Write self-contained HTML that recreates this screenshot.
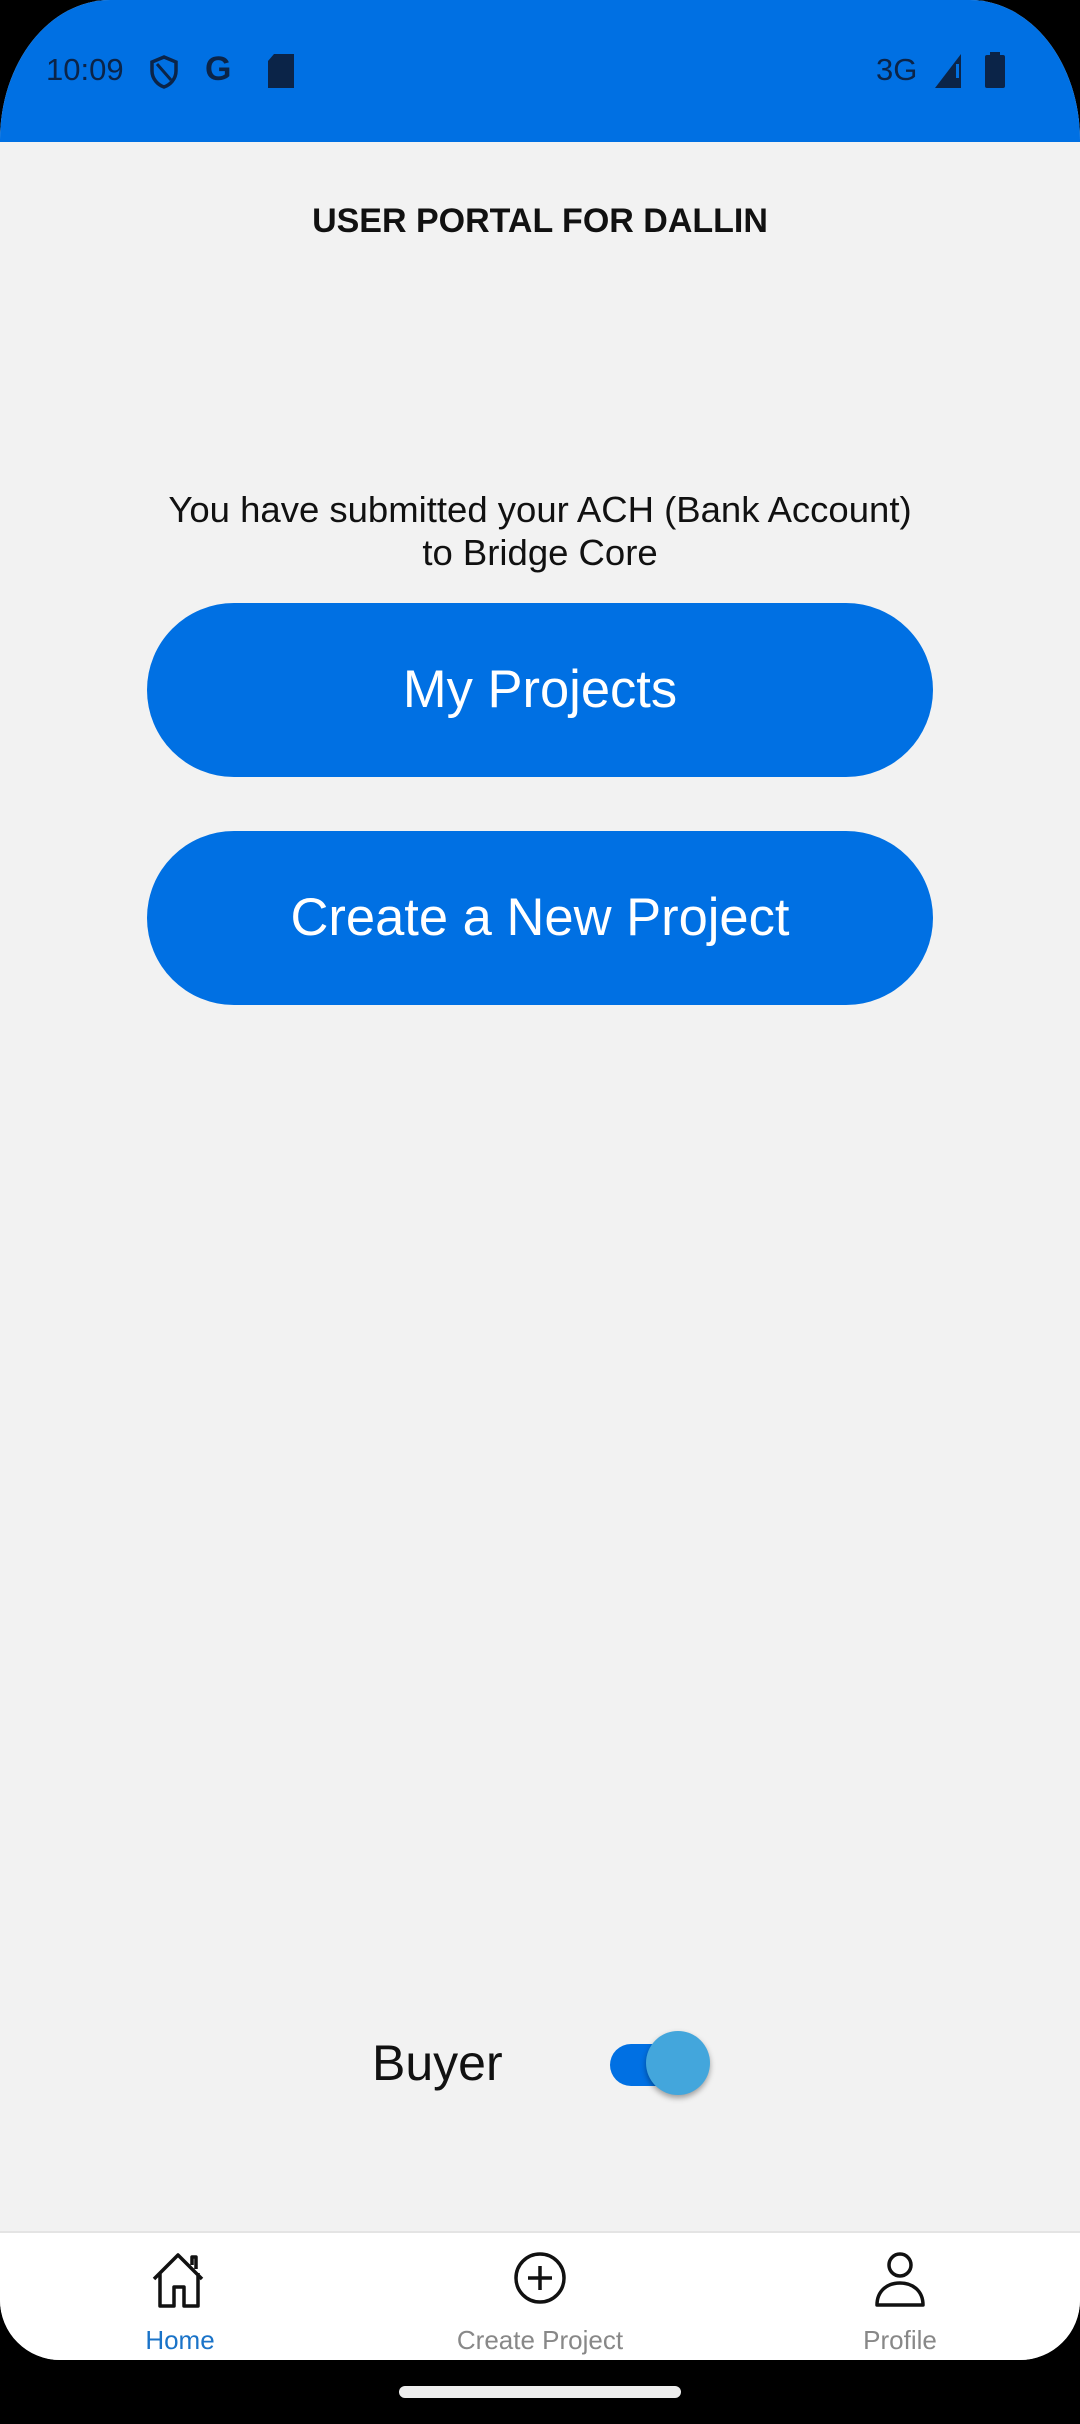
<!DOCTYPE html>
<html><head><meta charset="utf-8"><style>
*{margin:0;padding:0;box-sizing:border-box}
body{width:1080px;height:2424px;background:#000;font-family:"Liberation Sans",sans-serif;overflow:hidden;position:relative}
.screen{position:absolute;left:0;top:0;width:1080px;height:2360px;background:#f2f2f2;border-radius:110px 110px 60px 60px / 140px 140px 60px 60px;overflow:hidden}
.status{position:absolute;left:0;top:0;width:1080px;height:142px;background:#0070e3}
.st{position:absolute;top:52px;font-size:31px;color:#0b2448}
.title{position:absolute;top:202px;width:1080px;text-align:center;font-weight:bold;font-size:34px;color:#111}
.msg{position:absolute;top:488px;width:1080px;text-align:center;font-size:36.5px;line-height:43px;color:#111}
.btn{position:absolute;left:147px;width:786px;height:174px;border-radius:87px;background:#0070e3;color:#fff;font-size:52.5px;text-align:center;line-height:174px}
.buyer{position:absolute;left:372px;top:2034px;font-size:50px;color:#111}
.track{position:absolute;left:610px;top:2044px;width:82px;height:42px;border-radius:21px;background:#0070e3}
.knob{position:absolute;left:646px;top:2031px;width:64px;height:64px;border-radius:50%;background:#43a6dc;box-shadow:0 3px 6px rgba(0,0,0,.35)}
.tab{position:absolute;left:0;top:2231px;width:1080px;height:129px;background:#fff;border-top:2px solid #e4e4e4}
.lbl{position:absolute;top:92px;width:300px;text-align:center;font-size:26px;color:#888}
.ic{position:absolute;top:18px}
.home{position:absolute;left:399px;top:2386px;width:282px;height:12px;border-radius:6px;background:#eee}
</style></head><body>
<div class="screen">
<div class="status">
<div class="st" style="left:46px">10:09</div>
<svg style="position:absolute;left:148px;top:54px" width="32" height="36" viewBox="0 0 32 36"><path d="M16 3 L28 8 V17 C28 25 22 31 16 33 C10 31 4 25 4 17 V8 Z" fill="none" stroke="#0b2448" stroke-width="3.5"/><path d="M9 10 L23 26" stroke="#0b2448" stroke-width="3"/></svg>
<div class="st" style="left:205px;font-weight:bold;font-size:34px;top:50px">G</div>
<svg style="position:absolute;left:268px;top:54px" width="26" height="34"><path d="M6 0H26V34H0V7Z" fill="#0b2448"/></svg>
<div class="st" style="left:876px">3G</div>
<svg style="position:absolute;left:935px;top:54px" width="30" height="34"><path d="M26 0V34H0Z" fill="#0b2448"/><rect x="21" y="10" width="3" height="14" fill="#0070e3"/></svg>
<svg style="position:absolute;left:985px;top:52px" width="20" height="36"><rect x="5" y="0" width="10" height="4" fill="#0b2448"/><rect x="0" y="3" width="20" height="33" rx="2" fill="#0b2448"/></svg>
</div>
<div class="title">USER PORTAL FOR DALLIN</div>
<div class="msg">You have submitted your ACH (Bank Account)<br>to Bridge Core</div>
<div class="btn" style="top:603px">My Projects</div>
<div class="btn" style="top:831px">Create a New Project</div>
<div class="buyer">Buyer</div>
<div class="track"></div><div class="knob"></div>
<div class="tab">
<svg class="ic" style="left:148px" width="64" height="58" viewBox="0 0 64 58"><path d="M6 28 L30 4 L54 28 M12 22 V55 H26 V36 H36 V55 H50 V22 M44 14 V6 H48 V18" fill="none" stroke="#111" stroke-width="3.5" stroke-linejoin="round"/></svg>
<svg class="ic" style="left:513px" width="54" height="54" viewBox="0 0 54 54"><circle cx="27" cy="27" r="24" fill="none" stroke="#111" stroke-width="3.5"/><path d="M27 15V39M15 27H39" stroke="#111" stroke-width="3.5"/></svg>
<svg class="ic" style="left:873px" width="54" height="58" viewBox="0 0 54 58"><circle cx="27" cy="14" r="11" fill="none" stroke="#111" stroke-width="3.5"/><path d="M4 54 C4 40 14 32 27 32 C40 32 50 40 50 54 Z" fill="none" stroke="#111" stroke-width="3.5" stroke-linejoin="round"/></svg>
<div class="lbl" style="left:30px;color:#1a73c8">Home</div>
<div class="lbl" style="left:390px">Create Project</div>
<div class="lbl" style="left:750px">Profile</div>
</div>
</div>
<div class="home"></div>
</body></html>
